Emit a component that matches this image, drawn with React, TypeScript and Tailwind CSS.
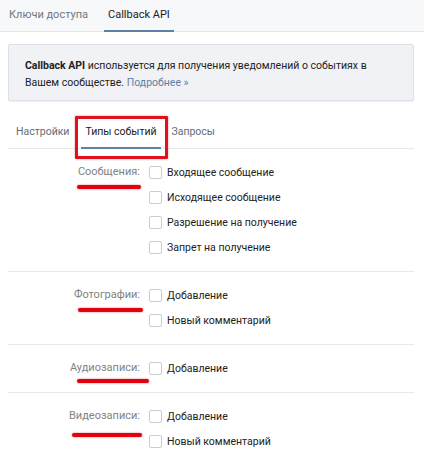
import React from "react";

type Section = {
  label: string;
  items: string[];
  mark: { left: number; width: number; top: number };
};

const sections: Section[] = [
  {
    label: "Сообщения:",
    items: [
      "Входящее сообщение",
      "Исходящее сообщение",
      "Разрешение на получение",
      "Запрет на получение",
    ],
    mark: { left: 77, width: 64, top: 36 },
  },
  {
    label: "Фотографии:",
    items: ["Добавление", "Новый комментарий"],
    mark: { left: 78, width: 65, top: 36 },
  },
  {
    label: "Аудиозаписи:",
    items: ["Добавление"],
    mark: { left: 77, width: 72, top: 34 },
  },
  {
    label: "Видеозаписи:",
    items: ["Добавление", "Новый комментарий"],
    mark: { left: 72, width: 70, top: 40 },
  },
];

const Checkbox = () => (
  <span className="w-[13px] h-[13px] border border-[#c5ced8] rounded-[2px] bg-white shrink-0" />
);

const App = () => {
  return (
    <div
      className="w-[424px] h-[463px] bg-white overflow-hidden text-[#222]"
      style={{ fontFamily: "Roboto, 'Liberation Sans', Arial, sans-serif" }}
    >
      {/* top tabs */}
      <div className="h-[32px] bg-[#f7f8fa] border-b border-[#e3e6ea] flex items-end pl-[9px] text-[11px]">
        <div className="h-full flex items-center pr-[16px] text-[#6f7780]">Ключи доступа</div>
        <div className="h-full flex items-center relative px-[4px] text-[#222]">
          Callback API
          <span className="absolute left-0 right-0 bottom-[-1px] h-[2px] bg-[#5e81a8]" />
        </div>
      </div>

      <div className="pl-[8px] pr-[10px] pt-[12px]">
        {/* info box */}
        <div className="bg-[#f0f2f5] border border-[#dce1e6] rounded-[2px] shadow-[0_1px_1px_rgba(0,0,0,0.06)] px-[16px] pt-[12px] pb-[9px] leading-[17px] text-[10.5px]">
          <b className="font-bold">Callback API</b> используется для получения уведомлений о событиях в
          <br />
          Вашем сообществе. <span className="text-[#5e7fa5]">Подробнее »</span>
        </div>

        {/* sub tabs */}
        <div className="mt-[15px] h-[33px] flex items-stretch border-b border-[#e7e8ec] text-[10.5px]">
          <div className="flex items-center pl-[8px] pr-[12px] text-[#656b72]">Настройки</div>
          <div className="relative flex items-center w-[80px] pl-[4px] text-[#222]">
            Типы событий
            <span className="absolute left-0 right-0 bottom-[-1px] h-[2px] bg-[#5e81a8]" />
            <span className="absolute left-[-6px] right-[-7px] top-0 bottom-[-11px] border-[3px] border-[#e0101d] rounded-[1px] shadow-[0_0_2px_rgba(200,0,0,0.5)]" />
          </div>
          <div className="flex items-center pl-[10px] text-[#656b72]">Запросы</div>
        </div>

        {sections.map((s, i) => (
          <div
            key={s.label}
            className={`relative py-[11px] ${i < sections.length - 1 ? "border-b border-[#e7e8ec]" : ""}`}
          >
            {s.items.map((item, j) => (
              <div key={item} className="flex items-center h-[25px]">
                <div className="w-[141px] text-right pr-[9px] text-[#828282] text-[11px]">
                  {j === 0 ? s.label : ""}
                </div>
                <Checkbox />
                <span className="ml-[5px] text-[10.5px] text-[#222]">{item}</span>
              </div>
            ))}
            <span
              className="absolute h-[4px] rounded-full bg-[#e3000f] shadow-[0_0_2px_rgba(200,0,0,0.6)]"
              style={{ left: s.mark.left - 8, width: s.mark.width, top: s.mark.top }}
            />
          </div>
        ))}
      </div>
    </div>
  );
};

export default App;
